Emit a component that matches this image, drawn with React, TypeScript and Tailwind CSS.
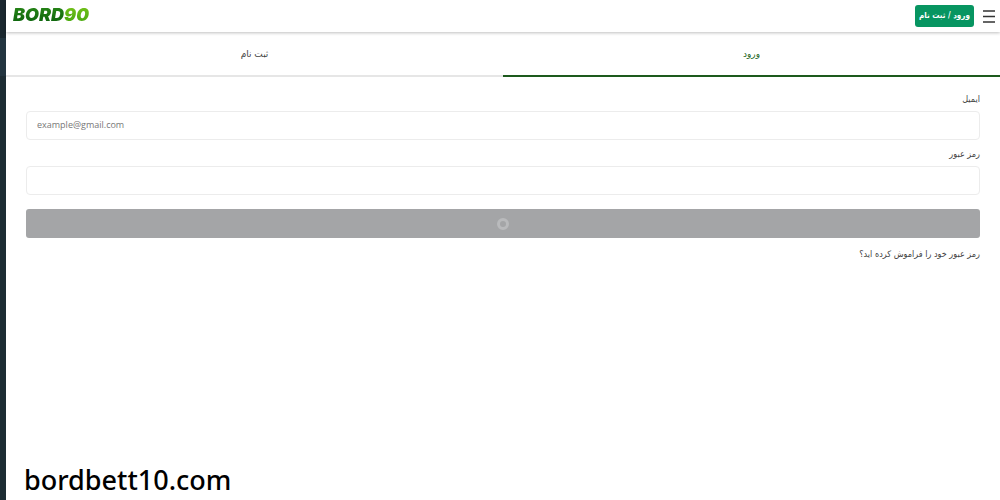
import type { ReactNode } from "react";

function Logo() {
  return (
    <a href="#" dir="ltr" aria-label="BORD90" className="font-['Inter',sans-serif] text-[18px] leading-7 font-black italic">
      <span className="bg-linear-to-b from-[#2a8a18] to-[#08600c] bg-clip-text text-transparent">BORD</span>
      <span className="bg-linear-to-b from-[#7ac51c] to-[#3fa50c] bg-clip-text pr-0.5 text-transparent">90</span>
    </a>
  );
}

function Header() {
  return (
    <header className="relative flex h-8 items-center justify-between bg-white pr-[5px] pb-0.5 pl-[7px] shadow-[0_1px_3px_rgba(0,0,0,0.25)]">
      <div className="flex items-center gap-2 pt-0.5">
        <button type="button" aria-label="منو" className="flex h-6 w-[13px] items-center justify-center">
          <svg viewBox="0 0 12 13" className="h-[13px] w-3" stroke="#333" strokeWidth="1.6">
            <path d="M0 1h12M0 6.5h12M0 12h12" />
          </svg>
        </button>
        <button type="button" className="h-[22px] w-[59px] rounded-[3px] bg-[#079561] font-['DejaVu_Sans_Condensed','DejaVu_Sans',sans-serif] text-[8px] leading-[22px] font-bold whitespace-nowrap text-white">
          ورود / ثبت نام
        </button>
      </div>
      <Logo />
    </header>
  );
}

function Field({ id, label, children }: { id: string; label: string; children: ReactNode }) {
  return (
    <div className="flex flex-col gap-1">
      <label htmlFor={id} className="leading-4">{label}</label>
      {children}
    </div>
  );
}

const inputClass =
  "h-[29px] w-full rounded-[4px] border border-[#ececec] bg-white px-2.5 pb-0.5 font-['Open_Sans',sans-serif] text-[9px] outline-none placeholder:text-[#777]";

export default function App() {
  return (
    <div dir="rtl" className="flex min-h-screen bg-white font-['DejaVu_Sans',sans-serif] text-[9px] text-[#444]">
      <main className="flex min-w-0 flex-1 flex-col">
        <Header />
        <div role="tablist" className="flex h-[45px]">
          <button type="button" role="tab" aria-selected="true" className="flex-1 border-b-2 border-[#1d5a1d] pt-0.5 text-[#246624]">
            ورود
          </button>
          <button type="button" role="tab" aria-selected="false" className="flex-1 border-b-2 border-[#e6e6e6] pt-0.5">
            ثبت نام
          </button>
        </div>
        <form className="flex flex-col gap-1.5 px-5 pt-[14px] font-['DejaVu_Sans_Condensed','DejaVu_Sans',sans-serif]">
          <Field id="email" label="ایمیل">
            <input id="email" type="email" dir="ltr" placeholder="example@gmail.com" className={inputClass} />
          </Field>
          <Field id="password" label="رمز عبور">
            <input id="password" type="password" dir="ltr" className={inputClass} />
          </Field>
          <button type="submit" aria-label="ورود" className="mt-2 flex h-[29px] items-center justify-center rounded-[3px] bg-[#a4a5a7]">
            <span className="size-3 rounded-full border-3 border-[#b9babc]" />
          </button>
          <a href="#" className="mt-0.5 self-start leading-4">رمز عبور خود را فراموش کرده اید؟</a>
        </form>
        <p dir="ltr" className="mt-auto px-[18px] font-['Noto_Sans',sans-serif] text-[27px] leading-10 font-medium text-black">
          bordbett10.com
        </p>
      </main>
      <aside className="flex w-1.5 flex-col bg-[#1d2c33]">
        <div className="h-[38px] bg-[#1a272f]" />
        <div className="h-[38px] bg-[#22343f]" />
      </aside>
    </div>
  );
}
